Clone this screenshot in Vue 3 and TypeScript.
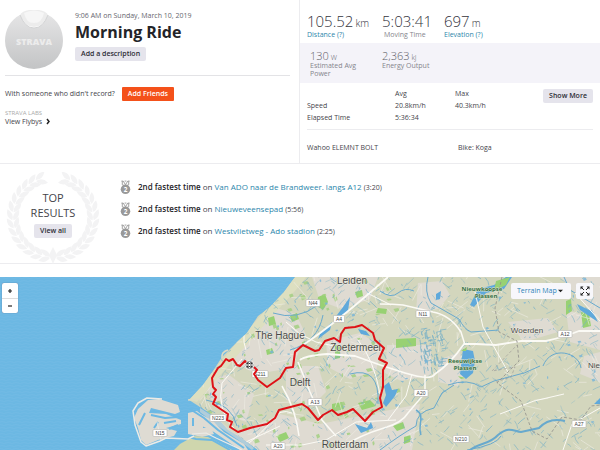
<script setup lang="ts">
import { ref } from 'vue'

interface Point { x: number; y: number }
interface Stroke { d: string; w: number }
interface Leaf { x: number; y: number; r: number }

const efforts = [
  { name: 'Van ADO naar de Brandweer. langs A12', time: '3:20' },
  { name: 'Nieuweveensepad', time: '5:56' },
  { name: 'Westvlietweg - Ado stadion', time: '2:25' },
]

const mapStyle = ref('Terrain Map')

/* Laurel wreath around the results heading: two rings of leaves per side */
const leaves: Leaf[] = []
for (let i = 0; i < 14; i++) {
  const t = ((108 + i * 11.6) * Math.PI) / 180
  for (const side of [1, -1]) {
    for (const [ring, splay] of [[37, 26], [43, -26]]) {
      const along = (Math.atan2(Math.cos(t), side * Math.sin(t)) * 180) / Math.PI
      leaves.push({
        x: 48 + side * Math.cos(t) * ring,
        y: 45 - Math.sin(t) * ring,
        r: along + side * splay,
      })
    }
  }
}

/* Repeatable random source, so that the terrain is always the same */
let seed = 4711
function rnd(): number {
  seed = (seed * 1103515245 + 12345) % 2147483648
  return seed / 2147483648
}
function point(): Point {
  return { x: 190 + rnd() * 415, y: 276 + rnd() * 176 }
}

const canals: Stroke[] = []
for (let i = 0; i < 850; i++) {
  const p = point()
  const a = (rnd() < 0.55 ? -0.75 : 0.85) + (rnd() - 0.5) * 0.7
  const len = 2 + rnd() * 8
  const dx = Math.cos(a) * len
  const dy = Math.sin(a) * len
  const bend = (rnd() - 0.5) * 4
  canals.push({
    d: `M${p.x.toFixed(1)} ${p.y.toFixed(1)}q${(dx / 2 + bend).toFixed(1)} ${(dy / 2).toFixed(1)} ${dx.toFixed(1)} ${dy.toFixed(1)}`,
    w: 0.4 + rnd() * 0.5,
  })
}
/* Dense peat ditches north of Gouda */
for (let i = 0; i < 90; i++) {
  const x = 420 + rnd() * 22
  const y = 328 + rnd() * 40
  const flat = rnd() < 0.4
  const len = 2 + rnd() * 5
  canals.push({ d: `M${x.toFixed(1)} ${y.toFixed(1)}l${(flat ? len : 1).toFixed(1)} ${(flat ? -1 : len).toFixed(1)}`, w: 0.9 })
}
const lanes: Stroke[] = []
for (let i = 0; i < 260; i++) {
  const p = point()
  const a = rnd() * 6.28
  const len = 6 + rnd() * 14
  lanes.push({
    d: `M${p.x.toFixed(1)} ${p.y.toFixed(1)}l${(Math.cos(a) * len).toFixed(1)} ${(Math.sin(a) * len).toFixed(1)}`,
    w: 0.6,
  })
}
function blobs(count: number, size: number, maxX: number): string {
  let d = ''
  for (let i = 0; i < count; i++) {
    const x = 200 + rnd() * (maxX - 200)
    const y = 278 + rnd() * 170
    const w = 1 + rnd() * size
    const h = 1 + rnd() * size * 0.7
    d += `M${x.toFixed(1)} ${y.toFixed(1)}l${w.toFixed(1)} ${(-h * 0.4).toFixed(1)} ${(w * 0.4).toFixed(1)} ${h.toFixed(1)} ${(-w).toFixed(1)} ${(h * 0.5).toFixed(1)}z`
  }
  return d
}
const parks = blobs(120, 4, 400)
const ponds = blobs(70, 2, 600)

const places = [
  { t: 'Leiden', x: 352, y: 284, s: 10 },
  { t: 'The Hague', x: 280, y: 339, s: 10 },
  { t: 'Zoetermeer', x: 356, y: 351, s: 10 },
  { t: 'Delft', x: 300, y: 386, s: 10 },
  { t: 'Rotterdam', x: 345, y: 448, s: 10 },
  { t: 'Woerden', x: 527, y: 333, s: 8 },
  { t: 'Nie', x: 594, y: 368, s: 8 },
]
const lakes = [
  { t: 'Nieuwkoopse', x: 482, y: 291 },
  { t: 'Plassen', x: 486, y: 298 },
  { t: 'Reeuwijkse', x: 465, y: 363 },
  { t: 'Plassen', x: 465, y: 370 },
]
const shields = [
  { t: 'N44', x: 313, y: 303, w: 14 },
  { t: 'A4', x: 339, y: 319, w: 11 },
  { t: 'N11', x: 423, y: 314, w: 14 },
  { t: 'A12', x: 565, y: 334, w: 14 },
  { t: 'A20', x: 421, y: 393, w: 14 },
  { t: 'A27', x: 579, y: 424, w: 14 },
  { t: 'N210', x: 461, y: 439, w: 16 },
  { t: 'A13', x: 315, y: 402, w: 14 },
  { t: 'A20', x: 278, y: 446, w: 14 },
  { t: 'N15', x: 160, y: 433, w: 14 },
  { t: 'N223', x: 218, y: 418, w: 16 },
  { t: 'S211', x: 260, y: 374, w: 16 },
]
const route =
  'M249 365L245 361 240 366 237 365 233 359 229 361 226 359 221 366 218 368 212 378 213 387 216 390 213 394 216 397 213 404 228 414 227 420 232 422 230 427 238 432 250 428 267 424 275 418 279 410 302 404 308 408 318 420 323 415 332 410 338 415 347 412 353 409 365 421 373 412 382 407 380 398 383 387 383 370 387 363 379 359 384 348 375 340 373 333 362 325 355 327 345 328 341 334 340 342 334 338 325 341 319 350 315 351 303 345 295 352 293 367 286 368 280 378 267 387 258 380 254 374 257 370 254 367'
</script>

<template>
  <main class="activity">
    <section class="summary">
      <div class="intro">
        <header class="hero">
          <svg class="avatar" viewBox="0 0 58 60" role="img" aria-label="Athlete jersey">
            <defs>
              <linearGradient id="jersey" x1="0" y1="0" x2="0" y2="1">
                <stop offset="0" stop-color="#e4e4e5" />
                <stop offset="1" stop-color="#c3c4c5" />
              </linearGradient>
            </defs>
            <path d="M15 5C5 10 0 20 0 31a29 28 0 0 0 58 0C58 20 53 10 43 5 40 12 36 18 29 18S18 12 15 5z" fill="url(#jersey)" />
            <path d="M15 5Q17 1 24 0h10q7 1 9 5-5 12-14 12T15 5z" fill="#ececec" />
            <path d="M19 3q10-5 20 0-2 10-10 10T19 3z" fill="#f6f6f6" />
            <path d="M15 5q5 13 14 13T43 5" fill="none" stroke="#d2d3d4" />
            <text x="29" y="35" text-anchor="middle" class="brand">STRAVA</text>
          </svg>
          <div class="headline">
            <time datetime="2019-03-10T09:06">9:06 AM on Sunday, March 10, 2019</time>
            <h1>Morning Ride</h1>
            <button type="button" class="btn">Add a description</button>
          </div>
        </header>
        <div class="friends">
          <span>With someone who didn't record?</span>
          <button type="button" class="btn primary">Add Friends</button>
        </div>
        <div class="labs">
          <small>STRAVA LABS</small>
          <a href="#flybys">View Flybys
            <svg class="chevron" viewBox="0 0 5 7" aria-hidden="true"><path d="M1 1l2 2.500L1 6" /></svg>
          </a>
        </div>
      </div>

      <div class="stats">
        <ul class="figures">
          <li><strong>105.52<span>km</span></strong><a href="#distance">Distance (?)</a></li>
          <li class="moving"><strong>5:03:41</strong><em>Moving Time</em></li>
          <li><strong>697<span>m</span></strong><a href="#elevation">Elevation (?)</a></li>
        </ul>
        <ul class="figures minor">
          <li><strong>130<span>W</span></strong><em>Estimated Avg Power</em></li>
          <li><strong>2,363<span>kJ</span></strong><em>Energy Output</em></li>
        </ul>
        <div class="more">
          <table>
            <thead>
              <tr><td></td><th scope="col">Avg</th><th scope="col">Max</th></tr>
            </thead>
            <tbody>
              <tr><th scope="row">Speed</th><td>20.8km/h</td><td>40.3km/h</td></tr>
              <tr><th scope="row">Elapsed Time</th><td>5:36:34</td><td></td></tr>
            </tbody>
          </table>
          <button type="button" class="btn">Show More</button>
        </div>
        <div class="gear"><span>Wahoo ELEMNT BOLT</span><span>Bike: Koga</span></div>
      </div>
    </section>

    <section class="results">
      <div class="top">
        <svg class="wreath" viewBox="0 0 96 92" aria-hidden="true">
          <path
            v-for="(l, i) in leaves"
            :key="i"
            d="M-5.500 0Q0-5 6.500 0 0 5-5.500 0z"
            :transform="`translate(${l.x} ${l.y}) rotate(${l.r})`"
          />
          <path d="M48 75l4 8-4 9-4-9z" />
        </svg>
        <h2>TOP<br />RESULTS</h2>
        <button type="button" class="btn">View all</button>
      </div>
      <ul class="efforts">
        <li v-for="e in efforts" :key="e.name">
          <svg class="medal" viewBox="0 0 12 15" role="img" aria-label="Second place">
            <path d="M1.500.5h2l2.500 4 2.500-4h2M2.500.5v4L6 6l3.500-1.500v-4M5 .5h2" fill="none" stroke="#999" />
            <circle cx="6" cy="9.500" r="5.200" fill="#999" />
            <text x="6" y="12" text-anchor="middle">2</text>
          </svg>
          <span><b>2nd fastest time</b> on <a href="#segment">{{ e.name }}</a> <small>({{ e.time }})</small></span>
        </li>
      </ul>
    </section>

    <section class="map">
      <svg class="terrain" viewBox="0 277 600 173" preserveAspectRatio="xMidYMin slice" role="img" aria-label="Route map">
        <defs>
          <pattern id="waves" width="8" height="6" patternUnits="userSpaceOnUse">
            <path d="M0 2q2-1 4 0t4 0M-2 5q2-1 4 0t4 0 4 0" fill="none" stroke="#7fc0e6" stroke-width=".6" opacity=".55" />
          </pattern>
          <clipPath id="land">
            <path d="M295 277L284 292 270 307 258 316 247 333 238 341 229 350 222 357 213 371 203 385 189 400 208 412 220 421 228 430 240 437 258 450H600V277z" />
          </clipPath>
        </defs>
        <rect y="277" width="600" height="173" fill="#6cb8e3" />
        <rect y="277" width="600" height="173" fill="url(#waves)" />

        <g clip-path="url(#land)">
          <rect x="180" y="277" width="420" height="173" fill="#d3d6bd" />
          <g fill="#dfdbd2">
            <path d="M228 354L250 334 276 308 296 314 306 335 292 368 256 374 233 362z" />
            <path d="M312 277h66l-8 22-28 10-22-8z" />
            <path d="M326 341l34-8 22 14-6 24-26 8-22-12z" />
            <path d="M286 366h32l8 26-14 14-26-6z" />
            <path d="M232 436L280 414 320 424 420 404 412 450H245z" />
            <path d="M206 382l22-8 26 20-8 28-22-8-14-16z" />
            <path d="M418 283l24-2 8 14-12 14-22 4z" />
            <path d="M438 360l22-8 4 22-6 12-20-4z" />
            <path d="M387 345h44v30l-30 6-16-8z" />
            <path d="M508 322l40-4 10 14-34 10zM566 310l34 10v30l-30-8zM584 356l16-4v30l-20-8zM560 277l40 44v-44z" />
          </g>
          <path d="M295 277L238 341 189 400 197 402 242 350 302 283 306 277z" fill="#dddfc0" />
          <g fill="#98d173">
            <path d="M318 297l7-3 3 8-5 8-6-4zM355 292l7-2 1 6-6 2zM290 316l7-3 2 6-7 3zM396 339l20-1v8l-20 2z" />
            <path d="M266 350l6-2 2 5-7 2zM268 318l6-2 2 8-7 2zM332 404l10-2 2 7-12 3zM358 403l12-3 6 6-14 4zM276 436l10-4 3 6-9 4z" />
            <path d="M378 308l9 1-1 5-10-1zM566 301l5-2 1 12-6 4zM581 312l8 2 2 12-8 2zM393 426l10-4 2 6-8 3zM404 437l7-2-1 7-6 2zM335 345l5 1v12l-5 1z" />
          </g>
          <path :d="parks" fill="#a3cf83" opacity=".85" />
          <path v-for="(l, i) in lanes" :key="`l${i}`" :d="l.d" class="lane" :stroke-width="l.w" />
          <path v-for="(c, i) in canals" :key="`c${i}`" :d="c.d" class="canal" :stroke-width="c.w" />
          <path :d="ponds" fill="#76b4da" opacity=".8" />
          <g fill="#5fa9db">
            <path d="M343 307l7-10-2 14-8 9-6-1zM332 322l-12 12-2 5 12-9zM470 305l8-16 16-4 12-8h6l-8 12-18 4-12 14z" />
            <path d="M463 349l10 2 2 10-2 12-7 6-6-5zM384 386l5-4 3 8 6-1-3 7-9 11-3-4 3-8zM436 294l5-3-1 8-4 1z" />
            <path d="M577 304l16 8 5 10-18-12zM594 404l6-6v6zM358 329l8 2 4 5-9-2zM355 424l12 4 4-6 2 6-12 5z" />
          </g>
          <path d="M496 281l14-4-4 8-12 6zM461 351l6-4-1 4zM458 376l7 2-4 1z" fill="#98d173" />
          <g class="river">
            <path d="M380 291q11 8 18 2t16-2M428 277q-4 15 3 26l28 16q5 10 12 13l28-2M380 450q20-15 36-24 0-14 18-18l8-15 12-8" />
            <path d="M470 450c10-8 19-5 28-15 12-10 16-3 23-3l18-4q10-11 26-7" stroke-width="2" />
            <path d="M416 410c10 5 1 16 5 25" stroke-width="1.500" />
            <path d="M467 450q30-5 34-14M540 366q-15 8-31 11t-28 10q-13-9-33-2M600 308l-30-18-6-13M543 366c8-21 36-14 38 2" />
            <path d="M206 400q26 4 31 26M273 313q24 8 45-8M290 350q28-8 33-35M350 374q30-8 28 30" />
          </g>
          <g class="road">
            <path d="M303 345q18-12 39-29T388 277" stroke-width="1.800" />
            <path d="M300 360q4-4 27-6l28 2q24 9 50 17t30 1c12-8 20-17 29-30h12l20 1 25-4h25q18-4 33-10h23l33 8" stroke-width="1.800" />
            <path d="M380 304q13 0 23 1l30 7q17 3 28 20l4 13M298 362l12 30 12 28 14 16M282 386q14 24 17 50M336 450q24-15 48-22 18-5 24-15l17-20v-18" stroke-width="1.500" />
            <path d="M334 346l-18-4-16-8-14-12M266 445h36l24-5 30-18 40-2M246 350q-6-16 4-26M240 450q24-18 32-30t20-7M367 293l24 12M575 293l25 28M508 372l-25-45-8-35M600 408l-28 16-9 26M500 414l34-13 30-7M380 394q-6-34-22-54" />
            <path d="M236 431q-20-20-14-48l20-24M246 442l34-16M412 374l-6 22-18 24" />
          </g>
          <path d="M502 277l-7 31 4 24 18 9 2 20-22 22 24 18 11 30 15 8 15-22 19 3 10-14 28-3" fill="none" stroke="#918f8c" stroke-dasharray="3 2" stroke-width=".8" />
          <path d="M496 382l15-5 4-10-23 4 25-26" fill="none" stroke="#a3a09c" stroke-dasharray="3 2" stroke-width=".7" />
        </g>

        <g class="port">
          <path d="M148 400l11-1 19 6 2 7-5 2-24-6-2 5 17 1 15 6v4l-15 4 11 3-3 5-16 4-12 5-5-5-3-12-4-10 4-9z" />
          <path d="M188 413l9-2 6 5v12h8l3 6-12 3-14-3z" />
          <path d="M196 412l16 8 12 12 20 12 4 6h-8l-26-18-12-6z" />
          <path d="M180 444l14-8 14 1 24 13h-58z" fill="#cfd6ad" />
          <path d="M200 408l20 13 18 14 16 13-2 2-18-13-16-11-18-14z" opacity=".6" />
        </g>
        <g class="dock">
          <path d="M139 425l6-12M151 415l14 3 13-1M154 428l4-6M164 423l12-2M169 429l9-4" />
          <path d="M190 409l14 9 14 12 26 18" />
          <path d="M193 418v8M184 436l12 3 16 1 18 10" />
        </g>
        <g class="dyke">
          <path d="M162 399l-15-1-9 5-5 8 2 14 6 17 5 4 14-5 6-3 22 1 6-3" />
          <path d="M192 434l14-1 10 5 26 12" stroke-width="1.200" />
          <path d="M157 422l4 18" stroke-width=".8" />
        </g>
        <path d="M188 400l12-1 4-4M222 358q-1-6 6-8" fill="none" stroke="#dcdbc5" stroke-width="1.500" />

        <g class="place">
          <text v-for="p in places" :key="p.t" :x="p.x" :y="p.y" :font-size="p.s">{{ p.t }}</text>
        </g>
        <g class="lake">
          <text v-for="(p, i) in lakes" :key="i" :x="p.x" :y="p.y">{{ p.t }}</text>
        </g>
        <g v-for="(s, i) in shields" :key="i" class="shield">
          <rect :x="s.x - s.w / 2" :y="s.y - 3.500" :width="s.w" height="7" rx="1" />
          <text :x="s.x" :y="s.y + 2">{{ s.t }}</text>
        </g>
        <path :d="route" class="route" />
        <g transform="translate(249.500 365)">
          <circle r="4.500" fill="#fff" />
          <path d="M-3-1.500h6M-3 1.500h6M-1.500-3v6M1.500-3v6" stroke="#333" stroke-width="1.200" stroke-dasharray="1.500 .7" />
          <circle r="3.600" fill="none" stroke="#555" stroke-width=".7" />
        </g>
      </svg>

      <div class="zoom">
        <button type="button" aria-label="Zoom in"><svg viewBox="0 0 6 6"><path d="M1 3h4M3 1v4" /></svg></button>
        <button type="button" aria-label="Zoom out"><svg viewBox="0 0 6 6"><path d="M1 3h4" /></svg></button>
      </div>
      <div class="tools">
        <div class="picker">
          <select v-model="mapStyle" aria-label="Map style">
            <option>Terrain Map</option>
            <option>Satellite</option>
          </select>
          <svg viewBox="0 0 6 4" aria-hidden="true"><path d="M0 .5h6l-3 3z" /></svg>
        </div>
        <button type="button" class="full" aria-label="Full screen">
          <svg viewBox="0 0 10 10">
            <path d="M4 4L1.500 1.500M6 4l2.500-2.500M4 6L1.500 8.500M6 6l2.500 2.500" fill="none" stroke="#222" />
            <path d="M.5.5h3l-3 3zM9.500.5v3l-3-3zM.5 9.500v-3l3 3zM9.500 9.500h-3l3-3z" fill="#222" />
          </svg>
        </button>
      </div>
    </section>
  </main>
</template>

<style>
body {
  margin: 0;
  background: #fff;
}
</style>

<style scoped>
.activity {
  display: flex;
  flex-direction: column;
  min-height: 100vh;
  color: #44444a;
  font-family: "Open Sans", "Noto Sans", sans-serif;
  font-size: 8px;
  line-height: 12px;
}
* { box-sizing: border-box; }
ul { list-style: none; margin: 0; padding: 0; }
h1, h2 { margin: 0; }
a { color: #2b86ab; text-decoration: none; }
em { font-style: normal; }
.btn {
  height: 14px;
  padding: 0 6px;
  border: 0;
  border-radius: 2px;
  background: #e5e4ec;
  color: #2c2c35;
  font: 600 7px/14px "Open Sans", sans-serif;
  white-space: nowrap;
}
.btn.primary { background: #f4511a; color: #fff; border-radius: 1px; }

.summary {
  display: grid;
  grid-template-columns: 1fr 1fr;
  border-bottom: 1px solid #ececef;
}
.intro { padding: 10px 9px 0 5px; border-right: 1px solid #ececef; }
.hero {
  display: flex;
  gap: 12px;
  height: 66px;
  border-bottom: 1px solid #e3e3e6;
}
.avatar { width: 58px; height: 60px; }
.brand { font: 800 9px "Open Sans", sans-serif; fill: #ececec; }
.headline { display: flex; flex-direction: column; align-items: flex-start; }
.headline time { color: #66666e; font-size: 7px; line-height: 12px; }
.headline h1 { font: 700 16px/20px "Open Sans", sans-serif; color: #242428; margin-bottom: 5px; }
.headline .btn { min-width: 70px; }
.friends { display: flex; align-items: center; gap: 7px; margin-top: 11px; font-size: 7px; }
.friends .btn { min-width: 52px; }
.labs { display: flex; flex-direction: column; margin-top: 8px; }
.labs small { color: #aaa; font-size: 6px; line-height: 8px; }
.labs a { color: #44444a; font-size: 7px; line-height: 9px; }
.chevron { width: 5px; height: 7px; margin-left: 2px; vertical-align: -1px; }
.chevron path { fill: none; stroke: #222; stroke-width: 1.500; }

.figures { display: grid; grid-template-columns: 75px 62px 1fr; padding: 11px 7px 0; height: 43px; }
.figures li { display: flex; flex-direction: column; }
.figures strong { font: 300 15px/20px "Open Sans", sans-serif; color: #34343c; white-space: nowrap; }
.figures strong span { font-size: 10px; line-height: 10px; margin-left: 2px; }
.figures a, .figures em { font-size: 7px; line-height: 8px; white-space: nowrap; }
.figures em { color: #85858d; }
.moving em { padding-left: 2px; }
.figures.minor { height: 40px; padding: 6px 10px 0; background: #f4f3f9; grid-template-columns: 72px 1fr; }
.minor strong { font-size: 11px; line-height: 13px; color: #606068; }
.minor strong span { font-size: 7px; line-height: 7px; }
.minor em { width: 52px; white-space: normal; }
.minor li + li em { white-space: nowrap; }
.more {
  display: flex;
  justify-content: space-between;
  align-items: flex-start;
  margin: 0 7px;
  padding: 5px 0;
  border-bottom: 1px solid #ececef;
}
.more .btn { margin-top: 1px; min-width: 50px; }
table { border-collapse: collapse; font-size: 7px; line-height: 12px; }
th, td { padding: 0; font-weight: 400; text-align: left; width: 60px; }
thead th { font-weight: 500; }
tr > :first-child { width: 88px; }
.gear { display: grid; grid-template-columns: 151px 1fr; padding: 12px 7px 9px; font-size: 7px; }

.results { display: flex; align-items: center; height: 100px; border-bottom: 1px solid #ececef; flex: none; }
.top {
  position: relative;
  display: flex;
  flex-direction: column;
  align-items: center;
  width: 96px;
  margin-left: 5px;
}
.wreath { position: absolute; top: -18px; left: 0; width: 96px; height: 92px; fill: #f3f3f4; }
.top h2 { position: relative; font: 400 11px/15px "Open Sans", sans-serif; text-align: center; margin-bottom: 4px; }
.top .btn { position: relative; }
.efforts { display: flex; flex-direction: column; gap: 7px; margin-left: 19px; margin-bottom: 9px; }
.efforts li { display: flex; align-items: center; gap: 7px; height: 15px; }
.efforts b { font-weight: 600; color: #242428; }
.efforts small { font-size: 7px; }
.medal { width: 11px; height: 15px; }
.medal text { font: 700 7px "Open Sans", sans-serif; fill: #fff; }

.map { position: relative; display: flex; flex: 1; min-height: 173px; margin-top: 13px; overflow: hidden; }
.terrain { flex: 1; width: 100%; height: auto; min-width: 0; }
.canal { fill: none; stroke: #77b0c6; opacity: .8; }
.lane { stroke: #efece4; }
.river { fill: none; stroke: #68a9cd; stroke-width: 1; }
.road { fill: none; stroke: #fbfaf5; stroke-width: 1; }
.port { fill: #dedbd3; }
.dock { fill: none; stroke: #6cb8e3; stroke-width: 2; }
.dyke { fill: none; stroke: #ecebe6; stroke-width: 1.500; stroke-linejoin: round; }
.route { fill: none; stroke: #de1217; stroke-width: 2; stroke-linejoin: round; }
.place text {
  font-family: "Liberation Sans", sans-serif;
  fill: #4a4a4a;
  text-anchor: middle;
  stroke: #eceadf;
  stroke-width: 1;
  paint-order: stroke;
}
.lake text {
  font: 700 6px "Open Sans", sans-serif;
  fill: #357047;
  text-anchor: middle;
  stroke: #dfe3cb;
  stroke-width: 1;
  paint-order: stroke;
}
.shield rect { fill: #fff; stroke: #aaa9a4; stroke-width: .5; }
.shield text { font: 5px "Liberation Sans", sans-serif; fill: #444; text-anchor: middle; }

.zoom {
  position: absolute;
  top: 6px;
  left: 2px;
  display: flex;
  flex-direction: column;
  border-radius: 2px;
  background: #fff;
  box-shadow: 0 0 1px #557;
}
.zoom button { width: 16px; height: 15px; padding: 0; border: 0; background: none; display: grid; place-items: center; }
.zoom button + button { border-top: 1px solid #ddd; }
.zoom svg { width: 6px; height: 6px; }
.zoom path { stroke: #222; stroke-width: 1.200; }
.tools { position: absolute; top: 6px; right: 7px; display: flex; gap: 5px; }
.picker { position: relative; display: flex; align-items: center; }
.picker select {
  appearance: none;
  width: 60px;
  height: 16px;
  padding: 0 6px;
  border: 0;
  border-radius: 2px;
  background: #f7f7fb;
  color: #2a83b8;
  font: 7px/16px "Open Sans", sans-serif;
}
.picker svg { position: absolute; right: 8px; width: 5px; height: 4px; fill: #222; pointer-events: none; }
.full { width: 17px; height: 16px; padding: 0; border: 0; border-radius: 2px; background: #f7f7fb; display: grid; place-items: center; }
.full svg { width: 10px; height: 10px; }
</style>
